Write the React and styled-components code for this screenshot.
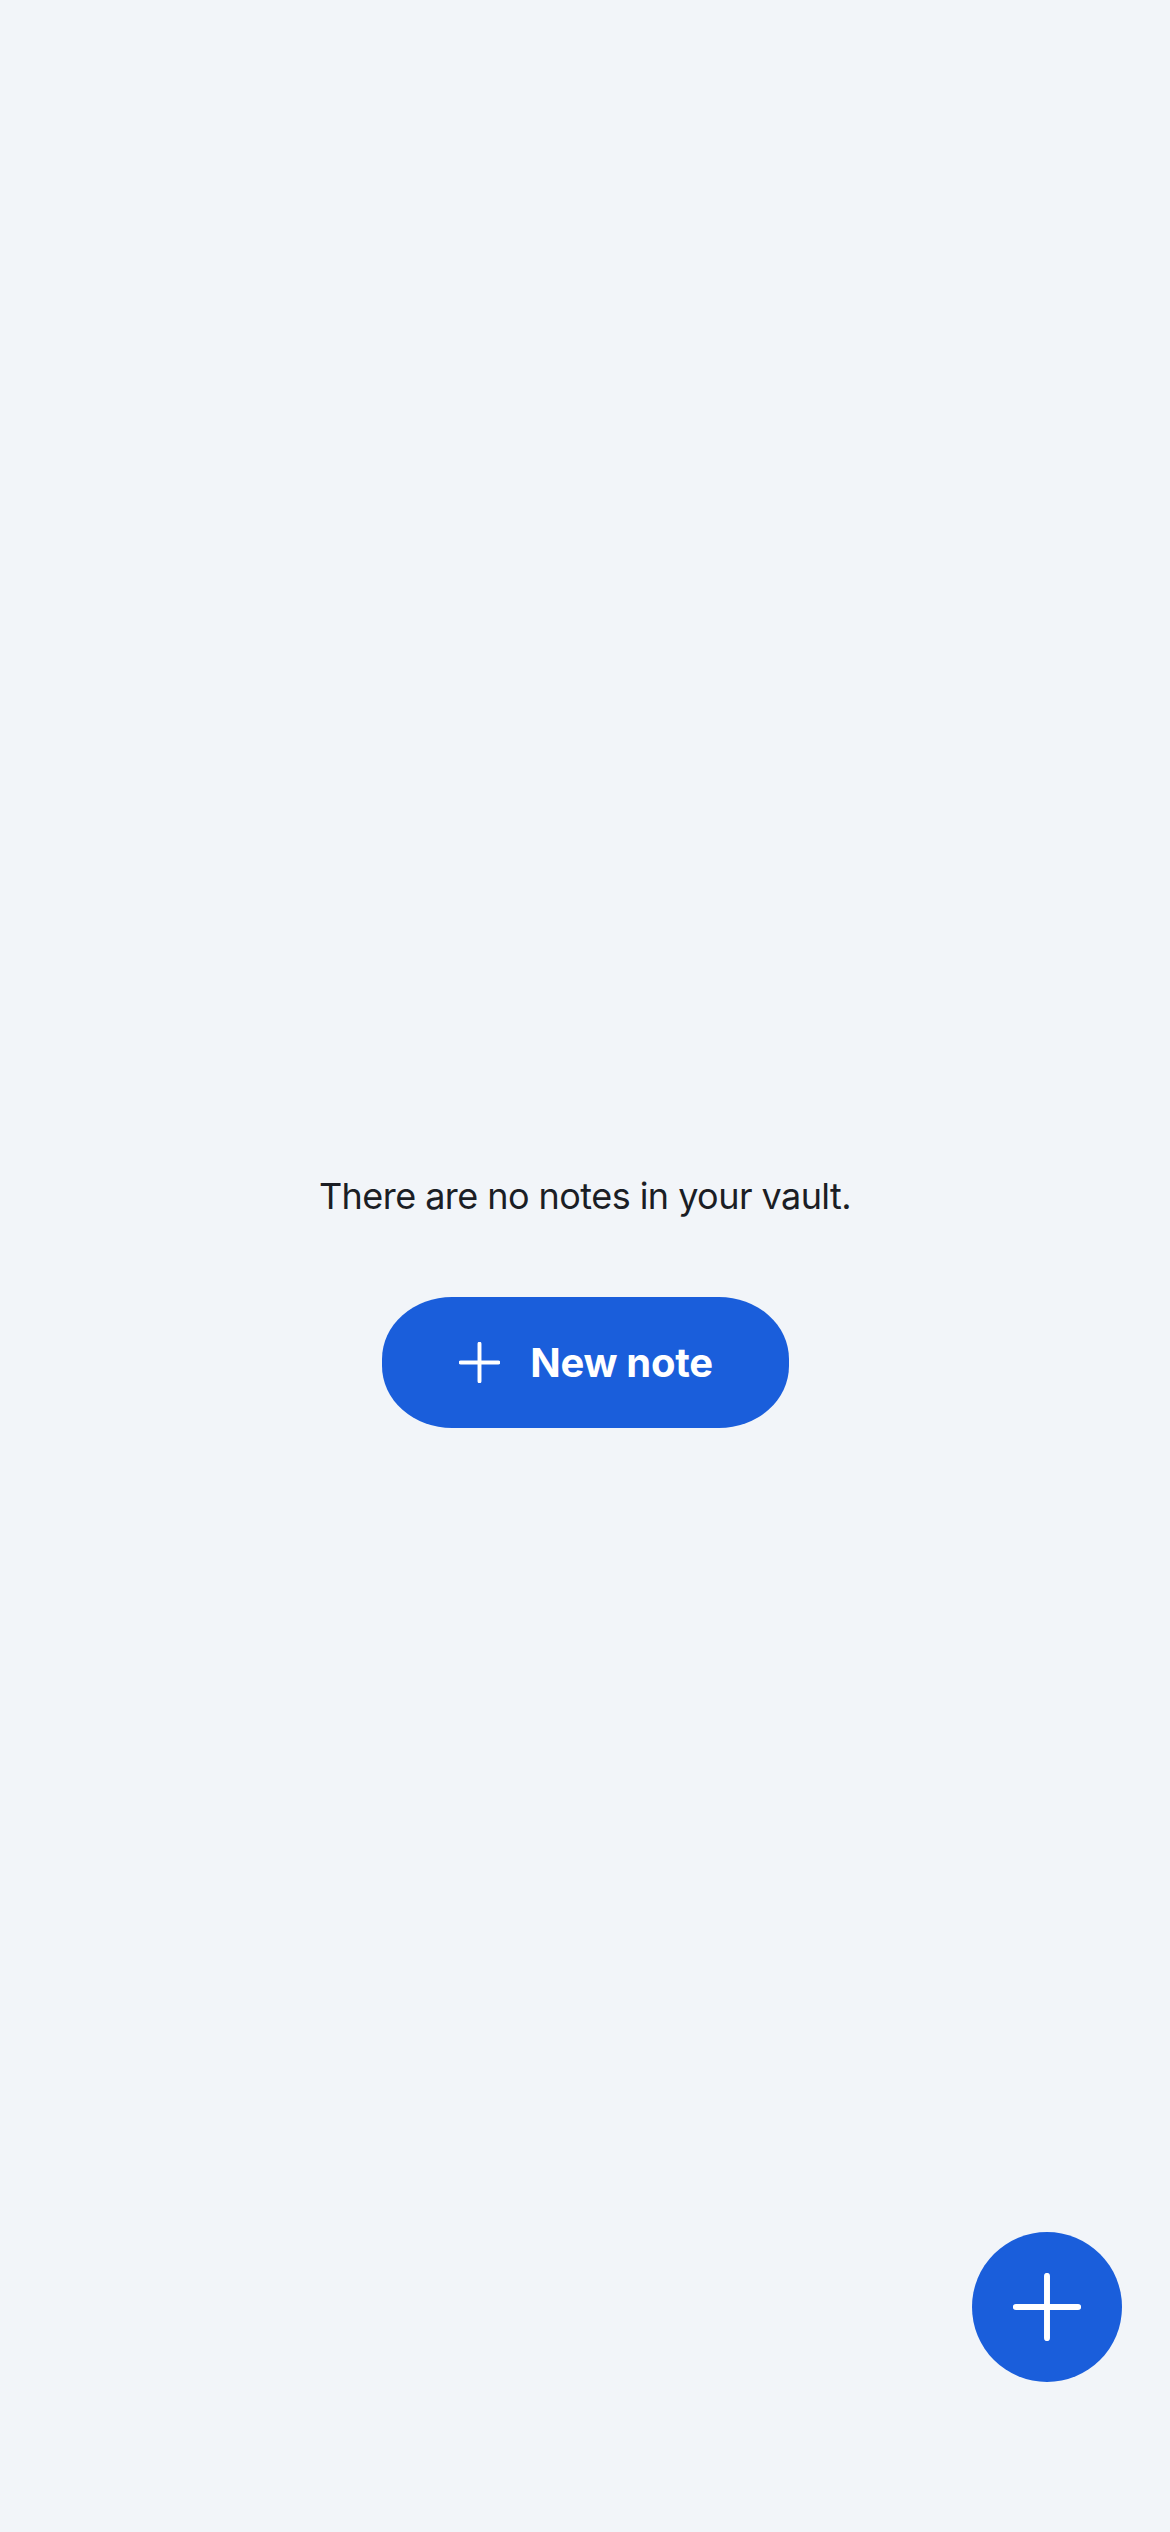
import React from "react";
import styled, { createGlobalStyle } from "styled-components";

const GlobalStyle = createGlobalStyle`
  html, body {
    margin: 0;
    padding: 0;
    background: #f2f5f9;
  }
  body {
    font-family: "Inter", "Noto Sans", sans-serif;
    color: #1b1e25;
  }
`;

const Page = styled.main`
  min-height: 2532px;
  display: flex;
  flex-direction: column;
  align-items: center;
  padding-top: 1174px;
  box-sizing: border-box;
`;

const EmptyText = styled.p`
  margin: 0;
  font-size: 36px;
  line-height: 44px;
  font-weight: 400;
  letter-spacing: -0.55px;
`;

const NewNoteButton = styled.button`
  margin-top: 79px;
  width: 407px;
  height: 131px;
  border: none;
  border-radius: 70px / 62px;
  background: #1a5edb;
  color: #ffffff;
  display: flex;
  align-items: center;
  justify-content: center;
  gap: 30px;
  padding: 0 0 0 2px;
  font-family: inherit;
  font-size: 40px;
  font-weight: 700;
  letter-spacing: -0.3px;
  cursor: pointer;
`;

const Fab = styled.button`
  position: fixed;
  right: 48px;
  bottom: 150px;
  width: 150px;
  height: 150px;
  border: none;
  border-radius: 50%;
  background: #1a5edb;
  display: flex;
  align-items: center;
  justify-content: center;
  cursor: pointer;
`;

const PlusIcon = ({ size, stroke }) => (
  <svg width={size} height={size} viewBox="0 0 24 24" fill="none">
    <path
      d="M12 1v22M1 12h22"
      stroke="#ffffff"
      strokeWidth={stroke}
      strokeLinecap="round"
    />
  </svg>
);

export default function App() {
  return (
    <>
      <GlobalStyle />
      <Page>
        <EmptyText>There are no notes in your vault.</EmptyText>
        <NewNoteButton>
          <PlusIcon size={41} stroke={2.3} />
          New note
        </NewNoteButton>
      </Page>
      <Fab aria-label="New note">
        <PlusIcon size={68} stroke={2.1} />
      </Fab>
    </>
  );
}
